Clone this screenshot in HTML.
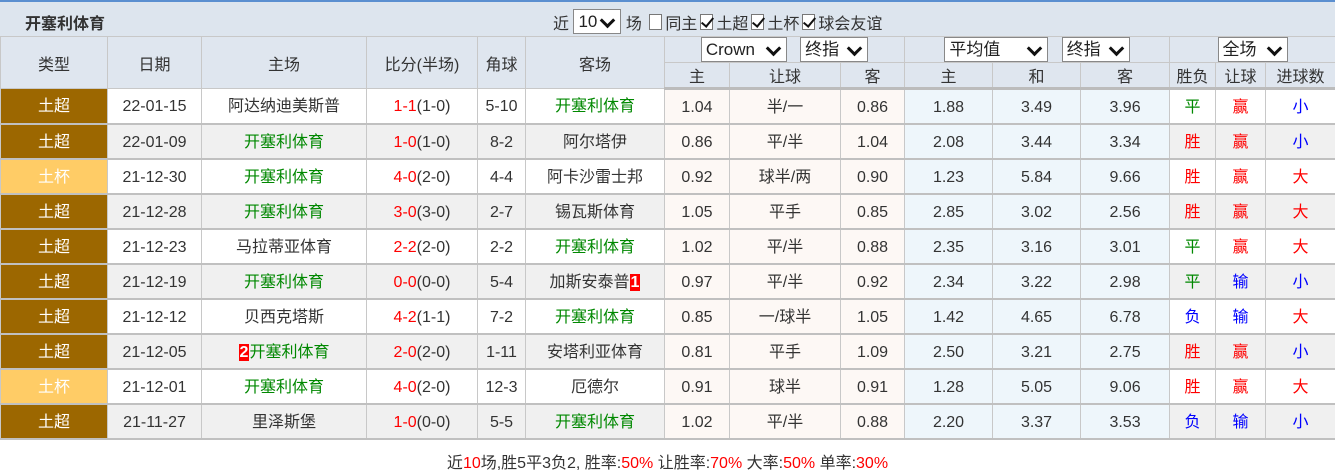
<!DOCTYPE html>
<html><head><meta charset="utf-8"><style>
*{margin:0;padding:0;box-sizing:border-box}
body{width:1335px;height:473px;background:#fff;font-family:"Liberation Sans","Noto Sans CJK SC",sans-serif;font-size:16px;color:#333;position:relative;overflow:hidden}
.top{position:absolute;left:0;top:0;width:1335px;height:36px;background:#dde5ee;border-top:2px solid #5b8fd0}
.top .t{position:absolute;left:25px;top:8px;font-weight:bold;font-size:16px;color:#333}
.top .f{position:absolute;left:553px;top:7px;font-size:16px;display:flex;align-items:center;white-space:nowrap}
.sel{display:inline-block;background:#fff;border:1px solid #888;height:25px;line-height:23px;padding:0 4px;font-size:17px;position:relative;color:#222}
.sel:after{content:"";position:absolute;right:7px;top:5px;width:8px;height:8px;border-right:3px solid #111;border-bottom:3px solid #111;transform:rotate(45deg)}
.cb{display:inline-block;width:13px;height:16px;border:1px solid #777;background:#fff;margin:0 3px;position:relative;vertical-align:middle}
.cb.c:after{content:"";position:absolute;left:3px;top:0px;width:5px;height:10px;border-right:2px solid #111;border-bottom:2px solid #111;transform:rotate(40deg)}
table{position:absolute;left:0;top:36px;border-collapse:collapse;table-layout:fixed;width:1335px}
td{text-align:center;border:1px solid #c8c8c8;white-space:nowrap;overflow:hidden;padding:0}
.h td{background:#dfe6ef;height:26px}
.h2 td{border-bottom:3px solid #bcbcbc}
.d td{height:35px;border-bottom:2px solid #c0c0c0;background:#fff;line-height:20px;padding-top:3px}
.d.g td{background:#f0f0f0}
.d td.p{background:#fdf8f5}
.d td.b{background:#eef6fb}
.d td.k{background:#9c6700;color:#fff}
.d td.y{background:#ffcc66;color:#fff}
.gr{color:#080}.r{color:#f00}.bl{color:#00f}
.bd{background:#f00;color:#fff;font-weight:bold;padding:0 1px}
.foot{position:absolute;top:449px;left:0;width:1335px;text-align:center;font-size:16px;color:#333}
</style></head><body>
<div class="top"><div class="t">开塞利体育</div>
<div class="f">近&nbsp;<span class="sel" style="width:48px">10</span>&nbsp;场&nbsp;<span class="cb"></span>同主<span class="cb c"></span>土超<span class="cb c"></span>土杯<span class="cb c"></span>球会友谊</div></div>
<table>
<colgroup><col style="width:107px"><col style="width:94px"><col style="width:165px"><col style="width:111px"><col style="width:48px"><col style="width:139px"><col style="width:65px"><col style="width:111px"><col style="width:64px"><col style="width:88px"><col style="width:88px"><col style="width:89px"><col style="width:46px"><col style="width:50px"><col style="width:70px"></colgroup>
<tr class="h"><td rowspan="2">类型</td><td rowspan="2">日期</td><td rowspan="2">主场</td><td rowspan="2">比分(半场)</td><td rowspan="2">角球</td><td rowspan="2">客场</td>
<td colspan="3"><span class="sel" style="width:86px;text-align:left">Crown</span>&nbsp;&nbsp;&nbsp;<span class="sel" style="width:68px;text-align:left">终指</span></td>
<td colspan="3"><span class="sel" style="width:104px;text-align:left">平均值</span>&nbsp;&nbsp;&nbsp;<span class="sel" style="width:68px;text-align:left">终指</span></td>
<td colspan="3"><span class="sel" style="width:70px;text-align:left">全场</span></td></tr>
<tr class="h h2"><td>主</td><td>让球</td><td>客</td><td>主</td><td>和</td><td>客</td><td>胜负</td><td>让球</td><td>进球数</td></tr>
<tr class="d"><td class="k">土超</td><td>22-01-15</td><td>阿达纳迪美斯普</td><td><span class="r">1-1</span>(1-0)</td><td>5-10</td><td class="gr">开塞利体育</td><td class="p">1.04</td><td class="p">半/一</td><td class="p">0.86</td><td class="b">1.88</td><td class="b">3.49</td><td class="b">3.96</td><td class="gr">平</td><td class="r">赢</td><td class="bl">小</td></tr>
<tr class="d g"><td class="k">土超</td><td>22-01-09</td><td class="gr">开塞利体育</td><td><span class="r">1-0</span>(1-0)</td><td>8-2</td><td>阿尔塔伊</td><td class="p">0.86</td><td class="p">平/半</td><td class="p">1.04</td><td class="b">2.08</td><td class="b">3.44</td><td class="b">3.34</td><td class="r">胜</td><td class="r">赢</td><td class="bl">小</td></tr>
<tr class="d"><td class="y">土杯</td><td>21-12-30</td><td class="gr">开塞利体育</td><td><span class="r">4-0</span>(2-0)</td><td>4-4</td><td>阿卡沙雷士邦</td><td class="p">0.92</td><td class="p">球半/两</td><td class="p">0.90</td><td class="b">1.23</td><td class="b">5.84</td><td class="b">9.66</td><td class="r">胜</td><td class="r">赢</td><td class="r">大</td></tr>
<tr class="d g"><td class="k">土超</td><td>21-12-28</td><td class="gr">开塞利体育</td><td><span class="r">3-0</span>(3-0)</td><td>2-7</td><td>锡瓦斯体育</td><td class="p">1.05</td><td class="p">平手</td><td class="p">0.85</td><td class="b">2.85</td><td class="b">3.02</td><td class="b">2.56</td><td class="r">胜</td><td class="r">赢</td><td class="r">大</td></tr>
<tr class="d"><td class="k">土超</td><td>21-12-23</td><td>马拉蒂亚体育</td><td><span class="r">2-2</span>(2-0)</td><td>2-2</td><td class="gr">开塞利体育</td><td class="p">1.02</td><td class="p">平/半</td><td class="p">0.88</td><td class="b">2.35</td><td class="b">3.16</td><td class="b">3.01</td><td class="gr">平</td><td class="r">赢</td><td class="r">大</td></tr>
<tr class="d g"><td class="k">土超</td><td>21-12-19</td><td class="gr">开塞利体育</td><td><span class="r">0-0</span>(0-0)</td><td>5-4</td><td>加斯安泰普<span class="bd">1</span></td><td class="p">0.97</td><td class="p">平/半</td><td class="p">0.92</td><td class="b">2.34</td><td class="b">3.22</td><td class="b">2.98</td><td class="gr">平</td><td class="bl">输</td><td class="bl">小</td></tr>
<tr class="d"><td class="k">土超</td><td>21-12-12</td><td>贝西克塔斯</td><td><span class="r">4-2</span>(1-1)</td><td>7-2</td><td class="gr">开塞利体育</td><td class="p">0.85</td><td class="p">一/球半</td><td class="p">1.05</td><td class="b">1.42</td><td class="b">4.65</td><td class="b">6.78</td><td class="bl">负</td><td class="bl">输</td><td class="r">大</td></tr>
<tr class="d g"><td class="k">土超</td><td>21-12-05</td><td class="gr"><span class="bd">2</span>开塞利体育</td><td><span class="r">2-0</span>(2-0)</td><td>1-11</td><td>安塔利亚体育</td><td class="p">0.81</td><td class="p">平手</td><td class="p">1.09</td><td class="b">2.50</td><td class="b">3.21</td><td class="b">2.75</td><td class="r">胜</td><td class="r">赢</td><td class="bl">小</td></tr>
<tr class="d"><td class="y">土杯</td><td>21-12-01</td><td class="gr">开塞利体育</td><td><span class="r">4-0</span>(2-0)</td><td>12-3</td><td>厄德尔</td><td class="p">0.91</td><td class="p">球半</td><td class="p">0.91</td><td class="b">1.28</td><td class="b">5.05</td><td class="b">9.06</td><td class="r">胜</td><td class="r">赢</td><td class="r">大</td></tr>
<tr class="d g"><td class="k">土超</td><td>21-11-27</td><td>里泽斯堡</td><td><span class="r">1-0</span>(0-0)</td><td>5-5</td><td class="gr">开塞利体育</td><td class="p">1.02</td><td class="p">平/半</td><td class="p">0.88</td><td class="b">2.20</td><td class="b">3.37</td><td class="b">3.53</td><td class="bl">负</td><td class="bl">输</td><td class="bl">小</td></tr>
</table>
<div class="foot">近<span class="r">10</span>场,胜5平3负2, 胜率:<span class="r">50%</span> 让胜率:<span class="r">70%</span> 大率:<span class="r">50%</span> 单率:<span class="r">30%</span></div>
</body></html>
